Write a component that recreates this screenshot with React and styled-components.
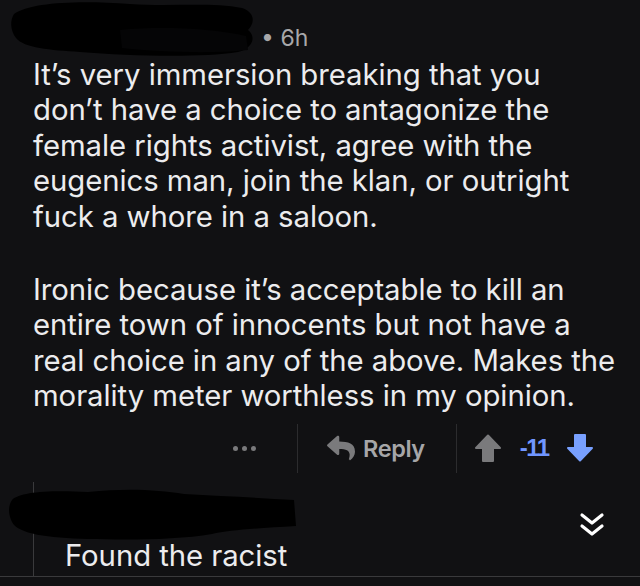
import React from 'react';
import styled, { createGlobalStyle } from 'styled-components';
import { FaReply } from 'react-icons/fa';

const GlobalStyle = createGlobalStyle`
  html, body {
    margin: 0;
    padding: 0;
    background: #111113;
  }
  body {
    font-family: Inter, "Noto Sans", "Liberation Sans", sans-serif;
    -webkit-font-smoothing: antialiased;
  }
`;

const Page = styled.div`
  width: 640px;
  height: 586px;
  background: #111113;
  overflow: hidden;
`;

const Thread = styled.div`
  border-bottom: 1px solid #3a3a3c;
`;

const Comment = styled.div`
  padding: 0 20px 0 33px;
`;

const Header = styled.div`
  position: relative;
  height: 52px;
  display: flex;
  align-items: flex-end;
  padding-left: 228px;
  font-size: 23px;
  line-height: 28px;
  color: #a8a8aa;
`;

const Redaction = styled.svg`
  position: absolute;
  left: ${p => p.$left}px;
  top: ${p => p.$top}px;
`;

const Body = styled.div`
  margin-top: 5px;
  color: #ececee;
  font-size: 29.3px;
  line-height: 35.4px;
  letter-spacing: -0.05px;
`;

const Paragraph = styled.p`
  margin: 0 0 38px;
  &:last-child { margin-bottom: 0; }
`;

const ActionBar = styled.div`
  display: flex;
  align-items: center;
  height: 49px;
  margin-top: 10px;
  padding-left: 200px;
`;

const Dots = styled.div`
  display: flex;
  gap: 4px;
  width: 23px;
  margin-right: 41px;
  span {
    width: 5px;
    height: 5px;
    border-radius: 50%;
    background: #7a7a7c;
  }
`;

const Divider = styled.div`
  width: 1px;
  align-self: stretch;
  background: #2c2c2e;
`;

const ReplyButton = styled.div`
  display: flex;
  align-items: center;
  gap: 8px;
  margin-left: 29px;
  margin-right: 31px;
  color: #a6a6a8;
  font-size: 23.5px;
  font-weight: 600;
  letter-spacing: -0.4px;
  svg { color: #7a7a7c; }
`;

const Votes = styled.div`
  display: flex;
  align-items: center;
  margin-left: 17px;
`;

const Score = styled.span`
  margin: 0 17px 0 18px;
  font-family: "Liberation Sans Narrow", "Liberation Sans", sans-serif;
  font-size: 24px;
  font-weight: 700;
  letter-spacing: -1.5px;
  color: #7096ff;
`;

const Reply = styled.div`
  margin: 9px 0 0 33px;
  height: 94px;
  border-left: 1px solid #3a3a3c;
  display: flex;
  align-items: center;
  position: relative;
`;

const ReplyBody = styled.div`
  flex: 1;
  align-self: flex-end;
  padding: 0 0 3px 31px;
  color: #ececee;
  font-size: 29.3px;
  line-height: 35px;
  letter-spacing: -0.05px;
`;

const Collapse = styled.div`
  width: 26px;
  height: 26px;
  margin: 0 35px 8px 0;
  color: #fff;
`;

function Arrow({ up, color }) {
  return (
    <svg width="28" height="28" viewBox="0 0 28 28" style={{ transform: up ? 'none' : 'rotate(180deg)' }}>
      <path
        d="M14 1.5 L26 14 L19 14 L19 27 L9 27 L9 14 L2 14 Z"
        fill={color}
        stroke={color}
        strokeWidth="2"
        strokeLinejoin="round"
      />
    </svg>
  );
}

function TopBlob() {
  return (
    <Redaction $left={-23} $top={0} width="250" height="58" viewBox="0 0 250 58">
      <path d="M4 14 C20 2 70 0 120 4 C160 7 200 2 232 8 C244 12 246 22 238 30 C246 36 244 48 228 52 C190 58 120 56 70 52 C40 50 14 48 6 38 C0 30 0 20 4 14 Z" fill="#000" />
      <path d="M110 30 C150 26 200 28 236 36 L238 50 C200 54 150 52 112 48 Z" fill="#050506" />
    </Redaction>
  );
}

function ReplyBlob() {
  return (
    <Redaction $left={-26} $top={4} width="290" height="56" viewBox="0 0 290 56">
      <path d="M4 14 C12 6 40 4 80 6 C120 2 150 4 176 8 C215 10 252 12 286 14 L288 40 C252 42 222 44 204 48 C170 54 120 54 80 53 C40 52 10 48 4 36 C0 28 0 20 4 14 Z" fill="#000" />
    </Redaction>
  );
}

export default function App() {
  return (
    <Page>
      <GlobalStyle />
      <Thread>
        <Comment>
          <Header>
            <TopBlob />
            <span>• 6h</span>
          </Header>
          <Body>
            <Paragraph>
              It’s very immersion breaking that you<br />
              don’t have a choice to antagonize the<br />
              female rights activist, agree with the<br />
              eugenics man, join the klan, or outright<br />
              fuck a whore in a saloon.
            </Paragraph>
            <Paragraph>
              Ironic because it’s acceptable to kill an<br />
              entire town of innocents but not have a<br />
              real choice in any of the above. Makes the<br />
              morality meter worthless in my opinion.
            </Paragraph>
          </Body>
          <ActionBar>
            <Dots><span /><span /><span /></Dots>
            <Divider />
            <ReplyButton>
              <FaReply size={28} />
              Reply
            </ReplyButton>
            <Divider />
            <Votes>
              <Arrow up color="#7a7a7c" />
              <Score>-11</Score>
              <Arrow color="#78a0ff" />
            </Votes>
          </ActionBar>
        </Comment>
        <Reply>
          <ReplyBlob />
          <ReplyBody>Found the racist</ReplyBody>
          <Collapse>
            <svg width="26" height="26" viewBox="0 0 26 26" fill="none" stroke="currentColor" strokeWidth="3.2" strokeLinecap="round" strokeLinejoin="round">
              <path d="M3 3 L13 11 L23 3" />
              <path d="M3 14 L13 22 L23 14" />
            </svg>
          </Collapse>
        </Reply>
      </Thread>
    </Page>
  );
}
